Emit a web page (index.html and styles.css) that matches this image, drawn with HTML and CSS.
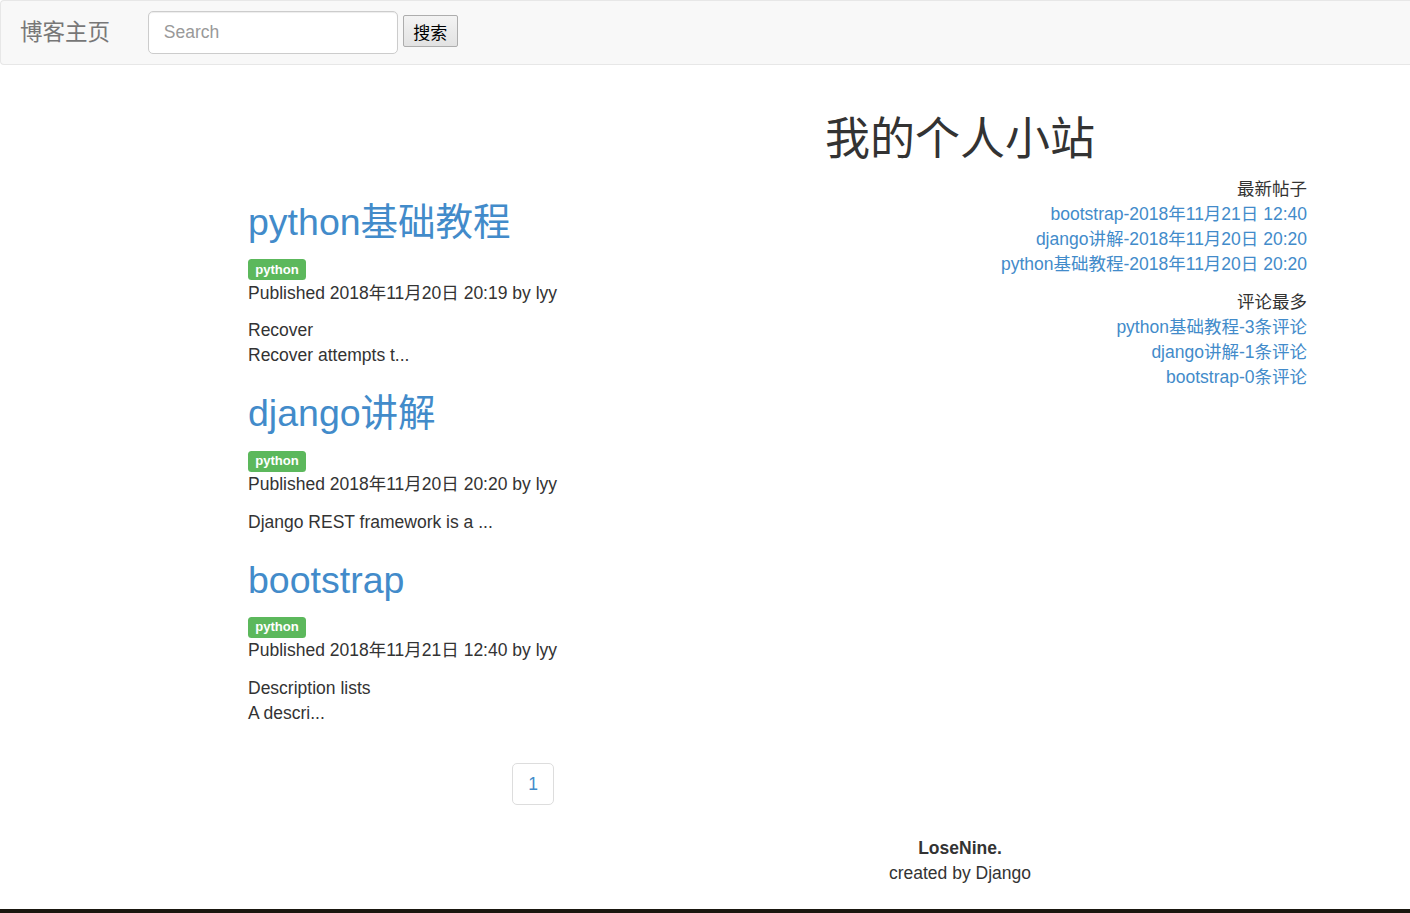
FILE: index.html
```html
<!DOCTYPE html>
<html lang="zh-CN">
<head>
<meta charset="utf-8">
<title>博客主页</title>
<link rel="stylesheet" href="styles.css">
</head>
<body>
<nav class="navbar">
  <a class="brand" href="#">博客主页</a>
  <form class="search">
    <input class="search-input" type="text" placeholder="Search">
    <button class="search-btn" type="button">搜索</button>
  </form>
</nav>

<div class="wrap">
  <header class="site-header">
    <h1 class="site-title">我的个人小站</h1>
  </header>

  <div class="row">
    <main class="main">
      <article class="post">
        <h2 class="post-title"><a href="#">python基础教程</a></h2>
        <p class="post-meta"><span class="label">python</span><br>Published 2018年11月20日 20:19 by lyy</p>
        <div class="post-summary"><p>Recover<br>Recover attempts t...</p></div>
      </article>
      <article class="post">
        <h2 class="post-title"><a href="#">django讲解</a></h2>
        <p class="post-meta"><span class="label">python</span><br>Published 2018年11月20日 20:20 by lyy</p>
        <div class="post-summary"><p>Django REST framework is a ...</p></div>
      </article>
      <article class="post">
        <h2 class="post-title"><a href="#">bootstrap</a></h2>
        <p class="post-meta"><span class="label">python</span><br>Published 2018年11月21日 12:40 by lyy</p>
        <div class="post-summary"><p>Description lists<br>A descri...</p></div>
      </article>
      <div class="pager">
        <ul class="pagination"><li><a href="#">1</a></li></ul>
      </div>
    </main>

    <aside class="side">
      <div class="side-block">
        <div class="side-head">最新帖子</div>
        <a href="#">bootstrap-2018年11月21日 12:40</a>
        <a href="#">django讲解-2018年11月20日 20:20</a>
        <a href="#">python基础教程-2018年11月20日 20:20</a>
      </div>
      <div class="side-block">
        <div class="side-head">评论最多</div>
        <a href="#">python基础教程-3条评论</a>
        <a href="#">django讲解-1条评论</a>
        <a href="#">bootstrap-0条评论</a>
      </div>
    </aside>
  </div>

  <footer class="site-footer">
    <strong>LoseNine.</strong><br>created by Django
  </footer>
</div>
<div class="bottom-bar"></div>
</body>
</html>
```

FILE: styles.css
```css
* { box-sizing: border-box; }
html, body { margin: 0; padding: 0; }
body {
  font-family: "Liberation Sans", Arial, "Noto Sans CJK SC", sans-serif;
  font-size: 17.5px;
  line-height: 25px;
  color: #333;
  background: #fff;
  overflow-x: hidden;
}
a { color: #428bca; text-decoration: none; }
p { margin: 0 0 12.5px; }

.navbar {
  display: flex;
  align-items: flex-start;
  height: 65px;
  background: #f8f8f8;
  border: 1px solid #e7e7e7;
  border-right: 0;
  border-radius: 4px 0 0 4px;
  margin-bottom: 25px;
}
.brand {
  color: #777;
  font-size: 22.5px;
  line-height: 25px;
  padding: 17px 18.75px 0 19px;
  font-family: "Noto Sans CJK SC", sans-serif;
}
.search {
  display: flex;
  align-items: flex-start;
  gap: 5px;
  margin: 10px 0 0 19px;
}
.search-input {
  width: 250px;
  height: 42.5px;
  padding: 7.5px 15px;
  font-family: "Liberation Sans", Arial, sans-serif;
  font-size: 17.5px;
  color: #555;
  border: 1.25px solid #ccc;
  border-radius: 5px;
  background: #fff;
  box-shadow: inset 0 1px 1px rgba(0,0,0,0.075);
  outline: none;
}
.search-input::placeholder { color: #999; }
.search-btn {
  margin-top: 4px;
  height: 32px;
  width: 55px;
  padding: 0;
  font-family: "Noto Sans CJK SC", sans-serif;
  font-weight: 400;
  font-size: 17px;
  color: #000;
  border: 1px solid #adadad;
  border-radius: 2px;
  background: linear-gradient(#f3f3f3, #e2e2e2);
}

.wrap { width: 1059px; margin-left: 248px; display: flow-root; }

.site-header { margin-left: 365px; text-align: center; }
.site-title {
  font-family: "Liberation Sans", "Noto Sans CJK SC", sans-serif;
  font-weight: 400;
  font-size: 45px;
  line-height: 49.5px;
  margin: 25px 0 12.5px;
  color: #333;
}

.row { display: flex; align-items: flex-start; }
.main { width: 570px; flex: none; }
.side { flex: 1; text-align: right; }
.side-block { display: flex; flex-direction: column; align-items: flex-end; margin-bottom: 12.5px; }
.side-head { color: #333; }

.post-title {
  font-weight: 400;
  font-size: 37.5px;
  line-height: 41.25px;
  margin: 25px 0 12.5px;
}
.label {
  display: inline-block;
  background: #5cb85c;
  color: #fff;
  font-weight: bold;
  font-size: 13.1px;
  line-height: 1;
  padding: 3.5px 7.2px 4.5px;
  border-radius: 3.5px;
  vertical-align: baseline;
}

.pager { text-align: center; }
.pagination {
  display: inline-block;
  list-style: none;
  padding: 0;
  margin: 25px 0;
}
.pagination a {
  display: block;
  padding: 7.5px 15px;
  border: 1.25px solid #ddd;
  border-radius: 5px;
  line-height: 25px;
  color: #428bca;
  background: #fff;
}

.site-footer {
  margin: 6px 0 0 365px;
  text-align: center;
}
.bottom-bar {
  margin-top: 23px;
  height: 40px;
  background: #1a170f;
}
```
